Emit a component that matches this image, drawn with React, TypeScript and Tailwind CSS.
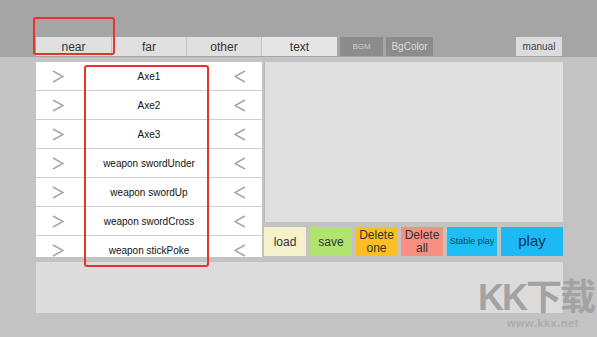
import React from "react";

const rows = ["Axe1", "Axe2", "Axe3", "weapon swordUnder", "weapon swordUp", "weapon swordCross", "weapon stickPoke"];

function Right() {
  return (
    <svg width="12" height="13" viewBox="0 0 12 13" fill="none">
      <polyline points="1,1 11,6.5 1,12" stroke="#a6a6a6" strokeWidth="1.5" />
    </svg>
  );
}
function Left() {
  return (
    <svg width="12" height="13" viewBox="0 0 12 13" fill="none">
      <polyline points="11,1 1,6.5 11,12" stroke="#a6a6a6" strokeWidth="1.5" />
    </svg>
  );
}

export default function App() {
  return (
    <div
      className="relative w-[597px] h-[337px] overflow-hidden bg-[#c3c3c3] flex flex-col"
      style={{ fontFamily: '"Liberation Sans", Arial, "Noto Sans CJK SC", sans-serif' }}
    >
      {/* header */}
      <div className="h-[57px] bg-[#a5a5a5] flex items-end pl-[36px] pb-[1px]">
        <div className="flex h-[19px] text-[12px] text-[#333]">
          <div className="w-[76px] bg-[#e0e0e0] flex items-center justify-center border-r border-[#c6c6c6]">near</div>
          <div className="w-[75px] bg-[#e0e0e0] flex items-center justify-center border-r border-[#c6c6c6]">far</div>
          <div className="w-[75px] bg-[#e0e0e0] flex items-center justify-center border-r border-[#c6c6c6]">other</div>
          <div className="w-[75px] bg-[#e6e6e6] flex items-center justify-center">text</div>
          <div className="ml-[3px] w-[43px] bg-[#8c8c8c] flex items-center justify-center text-[8px] text-[#cfcfcf]">BGM</div>
          <div className="ml-[3px] w-[47px] bg-[#8c8c8c] flex items-center justify-center text-[10px] text-[#dcdcdc]">BgColor</div>
          <div className="ml-[83px] w-[46px] bg-[#dcdcdc] flex items-center justify-center text-[10px] text-[#444]">manual</div>
        </div>
      </div>

      {/* main */}
      <div className="flex pl-[36px] pt-[5px]">
        <div className="w-[226px] h-[195px] bg-white overflow-hidden flex flex-col">
          {rows.map((r) => (
            <div key={r} className="h-[29px] shrink-0 border-b border-[#cfcfcf] flex items-center px-[16px]">
              <Right />
              <div className="flex-1 text-center text-[10px] text-[#111]">{r}</div>
              <Left />
            </div>
          ))}
        </div>
        <div className="ml-[2px] w-[299px] flex flex-col">
          <div className="h-[160px] bg-[#e0e0e0] border-l border-[#b8b8b8]"></div>
          <div className="mt-[5px] h-[29px] flex gap-[4px] text-[#333]">
            <div className="w-[42px] bg-[#f5f1cb] flex items-center justify-center text-[12px]">load</div>
            <div className="w-[42px] bg-[#b1e36f] flex items-center justify-center text-[12px]">save</div>
            <div className="w-[41px] bg-[#fdbd23] flex items-center justify-center text-center text-[12px] leading-[13px]">Delete<br />one</div>
            <div className="w-[42px] bg-[#f88f80] flex items-center justify-center text-center text-[12px] leading-[13px]">Delete<br />all</div>
            <div className="w-[50px] bg-[#1fbdf4] flex items-center justify-center text-[9px] text-[#1c3d66]">Stable play</div>
            <div className="w-[62px] bg-[#1cb9f5] flex items-center justify-center text-[15px] text-[#1b2f55]">play</div>
          </div>
        </div>
      </div>

      <div className="ml-[36px] mt-[5px] w-[527px] h-[51px] bg-[#dcdcdc]"></div>

      {/* red highlight boxes */}
      <div className="absolute left-[33px] top-[17px] w-[82px] h-[38px] border-2 border-[#e8322c] rounded-[3px]"></div>
      <div className="absolute left-[84px] top-[65px] w-[125px] h-[202px] border-2 border-[#e8322c] rounded-[3px]"></div>

      {/* watermark */}
      <div className="absolute left-[478px] top-[280px] text-[36px] font-bold text-[#a3a3a3] leading-none tracking-[-2px]">KK下载</div>
      <div className="absolute left-[507px] top-[318px] text-[11px] font-bold text-[#adadad] leading-none tracking-[0.5px]">www.kkx.net</div>
    </div>
  );
}
